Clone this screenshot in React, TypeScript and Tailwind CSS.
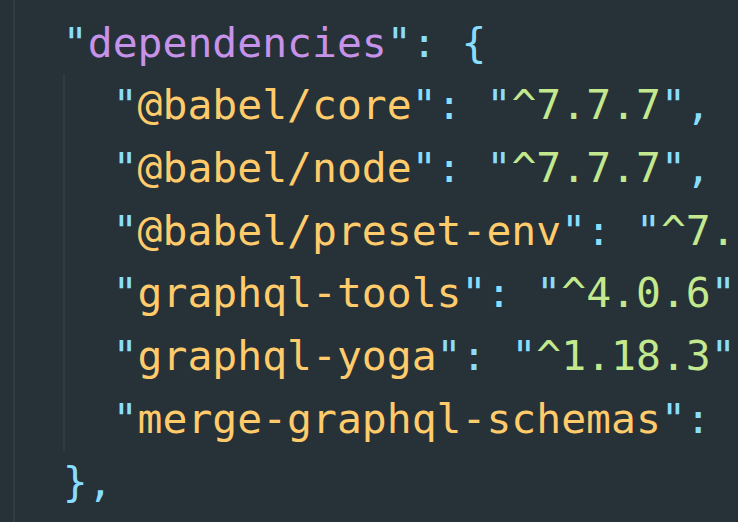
type Tok = [string, string];

const Q = "text-[#89DDFF]";
const K = "text-[#FFCB6B]";
const P = "text-[#C792EA]";
const S = "text-[#C3E88D]";

const lines: { depth: number; toks: Tok[] }[] = [
  { depth: 1, toks: [['"', Q], ["license", K], ['"', Q], [": ", Q], ['"', Q], ["ISC", S], ['"', Q], [",", Q]] },
  { depth: 1, toks: [['"', Q], ["dependencies", P], ['"', Q], [": {", Q]] },
  { depth: 2, toks: [['"', Q], ["@babel/core", K], ['"', Q], [": ", Q], ['"', Q], ["^7.7.7", S], ['"', Q], [",", Q]] },
  { depth: 2, toks: [['"', Q], ["@babel/node", K], ['"', Q], [": ", Q], ['"', Q], ["^7.7.7", S], ['"', Q], [",", Q]] },
  { depth: 2, toks: [['"', Q], ["@babel/preset-env", K], ['"', Q], [": ", Q], ['"', Q], ["^7.7.7", S], ['"', Q], [",", Q]] },
  { depth: 2, toks: [['"', Q], ["graphql-tools", K], ['"', Q], [": ", Q], ['"', Q], ["^4.0.6", S], ['"', Q], [",", Q]] },
  { depth: 2, toks: [['"', Q], ["graphql-yoga", K], ['"', Q], [": ", Q], ['"', Q], ["^1.18.3", S], ['"', Q], [",", Q]] },
  { depth: 2, toks: [['"', Q], ["merge-graphql-schemas", K], ['"', Q], [": ", Q], ['"', Q], ["^1.7.3", S], ['"', Q]] },
  { depth: 1, toks: [["},", Q]] },
  { depth: 1, toks: [['"', Q], ["devDependencies", P], ['"', Q], [": {", Q]] },
];

export default function App() {
  return (
    <div className="w-[738px] h-[522px] overflow-hidden bg-[#263238] pl-[13px]">
      <div
        className="-mt-[51px] flex flex-col text-[41.4px] leading-[62.7px] whitespace-pre"
        style={{ fontFamily: '"DejaVu Sans Mono", monospace' }}
      >
        {lines.map((l, i) => (
          <div key={i} className="flex h-[62.7px]">
            {Array.from({ length: l.depth }).map((_, d) => (
              <span key={d} className="w-[2ch] shrink-0 border-l-2 border-[#2e3c44]" />
            ))}
            <span>
              {l.toks.map(([t, c], j) => (
                <span key={j} className={c}>
                  {t}
                </span>
              ))}
            </span>
          </div>
        ))}
      </div>
    </div>
  );
}
